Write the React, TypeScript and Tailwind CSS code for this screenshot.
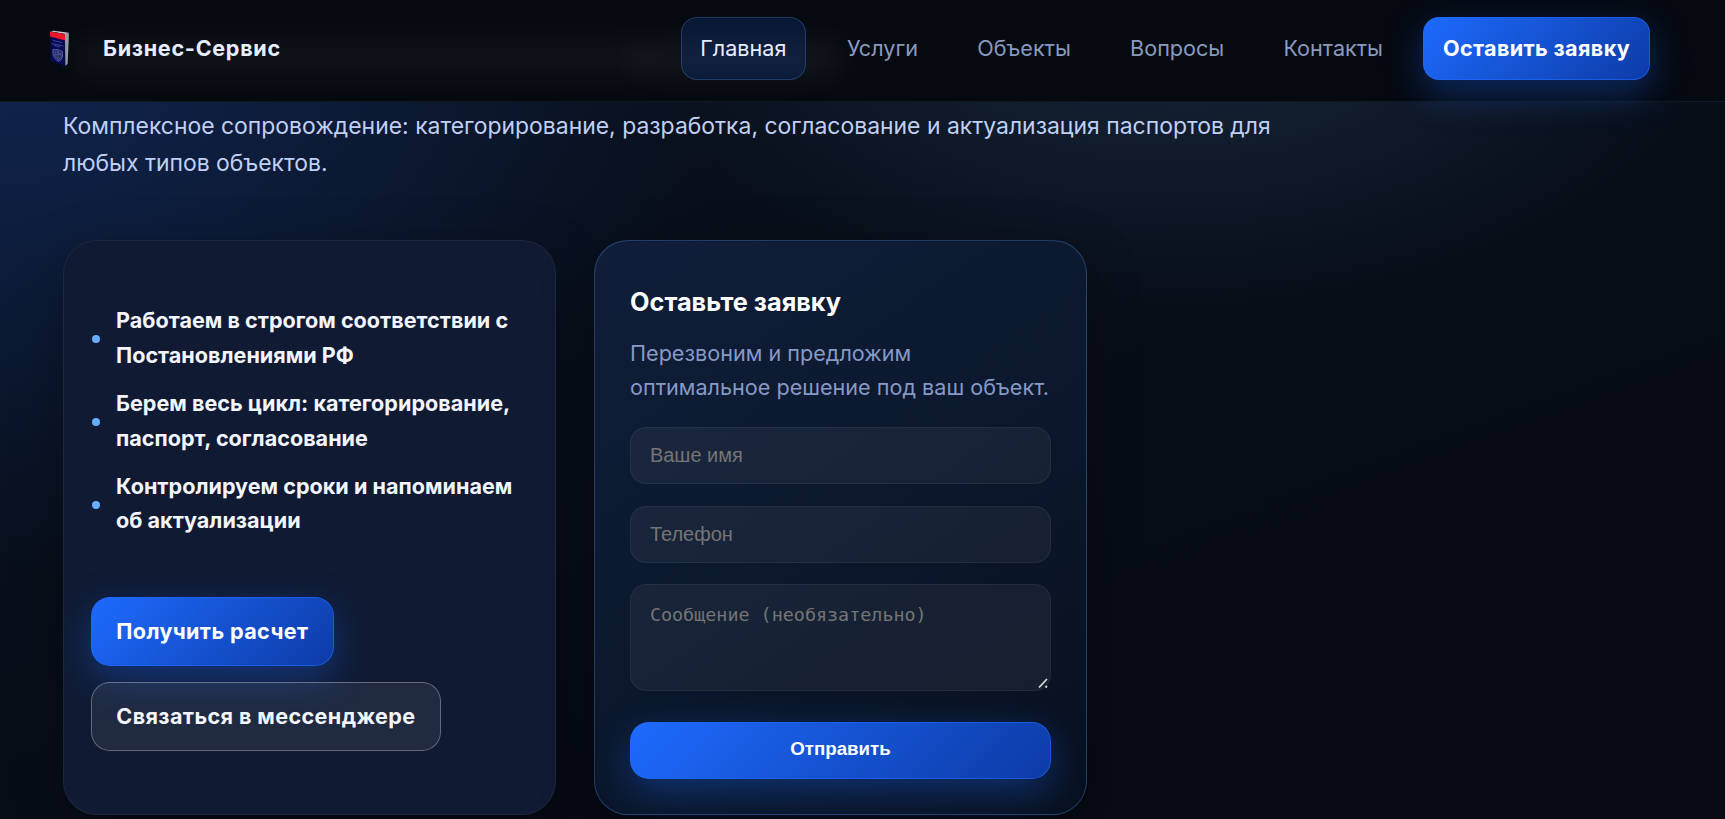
import type { ReactNode } from "react";

const navItems = ["Главная", "Услуги", "Объекты", "Вопросы", "Контакты"];

const benefits = [
  ["Работаем в строгом соответствии с", "Постановлениями РФ"],
  ["Берем весь цикл: категорирование,", "паспорт, согласование"],
  ["Контролируем сроки и напоминаем", "об актуализации"],
];

const primary =
  "border border-[#1e6bff]/60 bg-linear-135 from-[#1e6bff] to-[#0d3ba6] bg-origin-border font-bold text-white shadow-[0_13px_38px_rgba(30,107,255,0.35)]";

const field =
  "block w-full rounded-2xl border border-white/5 bg-white/5 px-[18.9px] text-white placeholder:text-[#757575] placeholder:opacity-100";

function Logo() {
  return (
    <svg width="22" height="38" viewBox="0 0 22 38">
      <path d="M15.800 4.500 20 4.200 18.600 35 16.200 37Z" fill="#9a9ca3" />
      <path d="M1 2.200 4.500 1.800 20 3.800 16 5Z" fill="#c9c9d0" />
      <path d="M1 2.500 16 5 16.300 37 1.800 32Z" fill="#070a55" />
      <path d="M1 2.500 16 5V11.500L1.100 7.500Z" fill="#ef1626" />
      <path d="m4 11.500 9 2M2.500 14.500l12 2.500M5 16.500l6 1.300" stroke="#4d559a" strokeWidth=".8" />
      <path
        d="m4 20.500 5 .2 4.500 1.800v5.500q-1.500 4-4.500 4.300-3.800-2.500-5-6.800Z"
        fill="#1d2664"
        stroke="#686fa5"
        strokeWidth=".8"
      />
      <path d="m6 22.500 6 2v4l-3 2-3-4Zm0 3.500 6-1M9 21.500v8" fill="none" stroke="#686fa5" strokeWidth=".6" />
    </svg>
  );
}

function Header() {
  return (
    <header className="relative z-10 h-[102px] border-b border-white/6 bg-[#050910]">
      <div className="absolute top-[38px] left-[70px] h-[40px] w-[580px] rounded-full bg-white/4 blur-[14px]" />
      <div className="absolute top-[38px] left-[630px] h-[40px] w-[215px] rounded-full bg-white/5 blur-[14px]" />
      <div className="relative flex items-center justify-between pt-[16.500px] pr-[75px] pl-[48.500px]">
        <div className="flex items-center">
          <Logo />
          <span className="ml-[32.500px] text-[21.600px] font-bold tracking-[0.700px] text-[#e6edff]">
            Бизнес-Сервис
          </span>
        </div>
        <nav className="flex items-center gap-[20.800px]">
          {navItems.map((item, i) => (
            <a
              key={item}
              className={
                i === 0
                  ? "mr-[1px] rounded-2xl border border-[#5aa2ff]/25 bg-[#1e6bff]/15 px-[18.600px] py-[13.500px] text-[#e6edff]"
                  : "rounded-2xl border border-transparent px-[18.200px] py-[13.500px] text-[#8a9abf]"
              }
            >
              {item}
            </a>
          ))}
          <a className={`rounded-2xl px-[18.900px] py-[13.500px] tracking-[0.350px] ${primary}`}>
            Оставить заявку
          </a>
        </nav>
      </div>
    </header>
  );
}

function Card({ className, children }: { className: string; children: ReactNode }) {
  return (
    <section
      className={`h-[575px] w-[493px] rounded-[34px] border shadow-[0_14px_54px_rgba(0,0,0,0.3)] ${className}`}
    >
      {children}
    </section>
  );
}

function Benefits() {
  return (
    <Card className="border-white/6 bg-[#101a32] px-[27px] pt-[62px]">
      <ul className="flex flex-col gap-[13.500px] font-bold text-[#f2f5fc]">
        {benefits.map(([first, second]) => (
          <li key={first} className="flex items-center gap-[16px] whitespace-nowrap">
            <span className="mt-[3px] ml-[1px] h-[8px] w-[8px] shrink-0 rounded-full bg-[#66adff]" />
            <span>
              {first}
              <br />
              {second}
            </span>
          </li>
        ))}
      </ul>
      <div className="mt-[59.500px] flex flex-col items-start gap-[15.500px]">
        <a className={`rounded-[19px] px-[24.300px] py-[16.200px] tracking-[0.380px] ${primary}`}>
          Получить расчет
        </a>
        <a className="rounded-[19px] border border-white/30 bg-white/7 px-[24.300px] py-[16.200px] font-bold tracking-[0.380px] text-[#f2f5fc]">
          Связаться в мессенджере
        </a>
      </div>
    </Card>
  );
}

function RequestForm() {
  return (
    <Card className="border-[#5aa2ff]/30 bg-linear-145 from-[#101e3a] via-[#0b182d] to-[#08101e] px-[35px] pt-[41px]">
      <h2 className="text-[25.300px] leading-[40px] font-bold text-white">Оставьте заявку</h2>
      <p className="mt-[13.500px] whitespace-nowrap text-[#8799c6]">
        Перезвоним и предложим
        <br />
        оптимальное решение под ваш объект.
      </p>
      <form className="mt-[21.500px] font-['Liberation_Sans',sans-serif] text-[20px]">
        <input className={`h-[57px] ${field}`} placeholder="Ваше имя" />
        <input className={`mt-[22px] h-[57px] ${field}`} placeholder="Телефон" />
        <div className="relative mt-[21px]">
          <textarea
            className={`h-[107px] resize-none py-[18px] font-['DejaVu_Sans_Mono',monospace] text-[18.400px] leading-[24px] ${field}`}
            placeholder="Сообщение (необязательно)"
          />
          <svg className="absolute right-[2px] bottom-[2px]" width="12" height="11" viewBox="0 0 12 11">
            <path d="m2 9.500 8-8.500M8.500 9.500 10 8" stroke="#d6d8dc" strokeWidth="1.800" fill="none" />
          </svg>
        </div>
        <button
          type="button"
          className={`mt-[31.500px] h-[57px] w-full rounded-[19px] pb-[2px] text-[18.700px] leading-none ${primary}`}
        >
          Отправить
        </button>
      </form>
    </Card>
  );
}

export default function App() {
  return (
    <div className="h-[819px] overflow-hidden bg-[#060b14] bg-[radial-gradient(680px_520px_at_20px_60px,rgba(26,76,180,0.3),transparent),radial-gradient(540px_300px_at_1190px_20px,rgba(60,95,135,0.28),transparent),linear-gradient(160deg,rgba(16,28,48,0.5),transparent_70%)] font-[Inter,sans-serif] text-[21.600px] leading-[34.560px]">
      <Header />
      <main className="pt-[6px] pl-[63px]">
        <p className="text-[22.930px] leading-[36.700px] text-[#c0d0f5]">
          Комплексное сопровождение: категорирование, разработка, согласование и актуализация паспортов для
          <br />
          любых типов объектов.
        </p>
        <div className="mt-[59px] flex gap-[38px]">
          <Benefits />
          <RequestForm />
        </div>
      </main>
    </div>
  );
}
